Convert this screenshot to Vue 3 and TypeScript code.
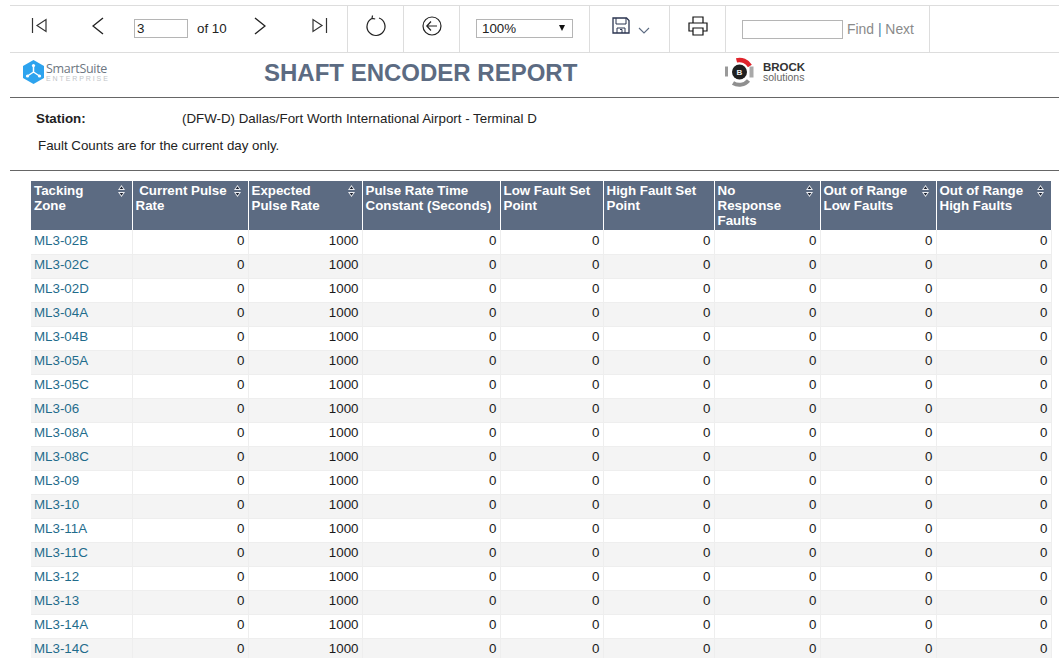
<template>
  <div class="page">
    <div class="toolbar">
      <div class="tb-nav">
        <svg class="ic-first" width="16" height="18" viewBox="0 0 16 18"><path d="M1.500 1v15M15 2.500v12L6 8.500z" fill="none" stroke="#333" stroke-width="1.200"/></svg>
        <svg class="ic-prev" width="12" height="18" viewBox="0 0 12 18"><path d="M11 1 1 9l10 8" fill="none" stroke="#222" stroke-width="1.400"/></svg>
        <input class="page-input" type="text" value="3" />
        <span class="of">of 10</span>
        <svg class="ic-next" width="12" height="18" viewBox="0 0 12 18"><path d="M1 1l10 8-10 8" fill="none" stroke="#222" stroke-width="1.400"/></svg>
        <svg class="ic-last" width="16" height="18" viewBox="0 0 16 18"><path d="M14.500 1v15M1 2.500v12l9-6z" fill="none" stroke="#333" stroke-width="1.200"/></svg>
      </div>
      <div class="tb-cell tb-icon">
        <svg width="22" height="22" viewBox="0 0 22 22"><path d="M7.500 3.200A9 9 0 1 0 14 3M7 3.300l.5-2.800M7 3.300l3.200.7" fill="none" stroke="#222" stroke-width="1.200"/></svg>
      </div>
      <div class="tb-cell tb-icon">
        <svg width="22" height="22" viewBox="0 0 22 22"><circle cx="11" cy="11" r="9" fill="none" stroke="#222" stroke-width="1.200"/><path d="M16 11H6M10 6.500 5.800 11l4.200 4.500" fill="none" stroke="#222" stroke-width="1.200"/></svg>
      </div>
      <div class="tb-cell tb-zoom">
        <div class="zoom-select"><span>100%</span><i class="caret"></i></div>
      </div>
      <div class="tb-cell tb-save">
        <svg width="18" height="17" viewBox="0 0 18 17"><path d="M1 1h13.500L17 3.500V16H1z" fill="none" stroke="#2b3550" stroke-width="1.300"/><path d="M4 1v6h10V1M5 16v-5h8v5M8 12.500h2V16" fill="none" stroke="#2b3550" stroke-width="1"/></svg>
        <svg class="ic-caret" width="12" height="7" viewBox="0 0 12 7"><path d="M1 1l5 5 5-5" fill="none" stroke="#5c6b82" stroke-width="1.100"/></svg>
      </div>
      <div class="tb-cell tb-print">
        <svg width="20" height="20" viewBox="0 0 20 20"><path d="M5 7V1h10v6M5 15H1V7h18v8h-4M5 12h10v7H5z" fill="none" stroke="#111" stroke-width="1.200"/></svg>
      </div>
      <div class="tb-cell tb-find">
        <input class="find-input" type="text" />
        <span class="find-links">Find <b>|</b> Next</span>
      </div>
    </div>

    <div class="report-head">
      <div class="logo-smart">
        <svg width="21" height="24" viewBox="0 0 21 24">
          <path d="M10.500 0 21 6v12l-10.500 6L0 18V6z" fill="#2da3ee"/>
          <path d="M10.500 5.500V12M10.500 12l-6 4M10.500 12l6 4" stroke="#fff" stroke-width="1.500" fill="none"/>
          <circle cx="10.500" cy="5.500" r="1.600" fill="#fff"/><circle cx="4.500" cy="16" r="1.600" fill="#fff"/><circle cx="16.500" cy="16" r="1.600" fill="#fff"/>
        </svg>
        <div class="smart-text">
          <span class="smart-name">SmartSuite</span>
          <span class="smart-sub">ENTERPRISE</span>
        </div>
      </div>
      <h1 class="title">SHAFT ENCODER REPORT</h1>
      <div class="logo-brock">
        <svg width="34" height="30" viewBox="0 0 34 30" fill="none">
          <path d="M12.500 3.400A12 12 0 0 1 25.900 9" stroke="#e0232b" stroke-width="4.500"/>
          <path d="M27.500 9.500v11" stroke="#a9a9a9" stroke-width="4"/>
          <path d="M24.500 23.500A12 12 0 0 1 9 26" stroke="#8f8f8f" stroke-width="4"/>
          <path d="M2.500 9.500v10" stroke="#9a9a9a" stroke-width="3"/>
          <circle cx="15.500" cy="15" r="7.500" fill="#1f1f1f"/>
          <text x="15.500" y="18" font-size="8" font-weight="700" fill="#eee" text-anchor="middle" font-family="Liberation Sans">B</text>
        </svg>
        <div class="brock-text">
          <span class="brock-name">BROCK</span>
          <span class="brock-sub">solutions</span>
        </div>
      </div>
    </div>

    <div class="info">
      <div class="station">
        <span class="station-label">Station:</span>
        <span>(DFW-D) Dallas/Fort Worth International Airport - Terminal D</span>
      </div>
      <p class="note">Fault Counts are for the current day only.</p>
    </div>

    <div class="table-wrap">
      <table class="grid">
        <colgroup>
          <col v-for="col in columns" :key="col.label" :style="{ width: col.width + 'px' }" />
        </colgroup>
        <thead>
          <tr>
            <th v-for="col in columns" :key="col.label">
              <span v-html="col.label"></span>
              <svg v-if="col.sort" class="sort" width="7" height="12" viewBox="0 0 7 12">
                <path d="M3.500 0 7 5H0z" fill="#eceef2"/>
                <path d="M3.500 12 7 7H0z" fill="#eceef2"/>
                <path d="M3.500 1.500 5.300 4H1.700zM3.500 10.500 5.300 8H1.700z" fill="#1c2230"/>
              </svg>
            </th>
          </tr>
        </thead>
        <tbody>
          <tr v-for="zone in zones" :key="zone">
            <td class="zone">{{ zone }}</td>
            <td>0</td>
            <td>1000</td>
            <td>0</td>
            <td>0</td>
            <td>0</td>
            <td>0</td>
            <td>0</td>
            <td>0</td>
          </tr>
        </tbody>
      </table>
    </div>
  </div>
</template>

<script setup lang="ts">
const columns = [
  { label: 'Tacking<br>Zone', width: 101, sort: true },
  { label: '&nbsp;Current Pulse<br>Rate', width: 116, sort: true },
  { label: 'Expected<br>Pulse Rate', width: 114, sort: true },
  { label: 'Pulse Rate Time<br>Constant (Seconds)', width: 138, sort: false },
  { label: 'Low Fault Set<br>Point', width: 103, sort: false },
  { label: 'High Fault Set<br>Point', width: 111, sort: false },
  { label: 'No<br>Response<br>Faults', width: 106, sort: true },
  { label: 'Out of Range<br>Low Faults', width: 116, sort: true },
  { label: 'Out of Range<br>High Faults', width: 115, sort: true }
]

const zones = [
  'ML3-02B', 'ML3-02C', 'ML3-02D', 'ML3-04A', 'ML3-04B', 'ML3-05A',
  'ML3-05C', 'ML3-06', 'ML3-08A', 'ML3-08C', 'ML3-09', 'ML3-10',
  'ML3-11A', 'ML3-11C', 'ML3-12', 'ML3-13', 'ML3-14A', 'ML3-14C'
]
</script>

<style>
html, body {
  margin: 0;
  height: 658px;
  overflow: hidden;
  background: #fff;
}
</style>

<style scoped>
.page {
  padding: 5px 0 0 10px;
  font-family: "Liberation Sans", Arial, sans-serif;
  font-size: 13.333px;
  color: #222;
}

.toolbar {
  display: flex;
  height: 46px;
  border-top: 1px solid #ddd;
  border-bottom: 1px solid #ddd;
}

.tb-nav {
  width: 338px;
  display: flex;
  align-items: center;
  border-right: 1px solid #ddd;
  box-sizing: border-box;
  padding-bottom: 2px;
}
.ic-first { margin-left: 21px; margin-top: -4px; }
.ic-prev { margin-left: 45px; margin-top: -4px; }
.page-input {
  width: 54px;
  height: 19px;
  margin-left: 30px;
  box-sizing: border-box;
  border: 1px solid #b5b5b5;
  padding: 0 2px;
  font: 13.333px "Liberation Sans", Arial, sans-serif;
  color: #222;
}
.of { margin-left: 9px; color: #222; }
.ic-next { margin-left: 27px; margin-top: -4px; }
.ic-last { margin-left: 46px; margin-top: -4px; }

.tb-cell {
  display: flex;
  align-items: center;
  box-sizing: border-box;
  border-right: 1px solid #ddd;
}
.tb-icon { width: 56px; justify-content: center; padding-bottom: 6px; }
.tb-zoom { width: 130px; padding-left: 16px; padding-bottom: 2px; }
.zoom-select {
  width: 97px;
  height: 19px;
  box-sizing: border-box;
  border: 1px solid #b5b5b5;
  padding: 0 7px 0 5px;
  display: flex;
  align-items: center;
  justify-content: space-between;
  line-height: 17px;
  color: #222;
}
.caret {
  border-left: 3px solid transparent;
  border-right: 3px solid transparent;
  border-top: 6px solid #111;
}
.tb-save { width: 80px; padding-left: 22px; padding-bottom: 8px; }
.ic-caret { margin-left: 8px; margin-top: 10px; }
.tb-print { width: 56px; justify-content: center; padding-bottom: 6px; }
.tb-find { width: 204px; padding-left: 16px; }
.find-input {
  width: 101px;
  height: 19px;
  box-sizing: border-box;
  border: 1px solid #b5b5b5;
  padding: 0;
}
.find-links { margin-left: 4px; font-size: 13.900px; color: #8a8a8a; }
.find-links b { font-weight: 400; color: #4e7fa5; }

.report-head {
  height: 44px;
  display: flex;
  align-items: flex-start;
  border-bottom: 1px solid #666;
}
.logo-smart {
  display: flex;
  align-items: center;
  margin: 7px 0 0 13px;
  width: 118px;
}
.smart-text {
  display: flex;
  flex-direction: column;
  margin-left: 2px;
}
.smart-name {
  font-family: "Open Sans", sans-serif;
  font-size: 12.500px;
  line-height: 13px;
  letter-spacing: -0.300px;
  color: #6d7681;
}
.smart-sub {
  font-size: 7px;
  line-height: 7px;
  letter-spacing: 1.900px;
  color: #c2c5c8;
}
.title {
  margin: 6px 0 0 123px;
  width: 325px;
  font-size: 24px;
  line-height: 28px;
  font-weight: 700;
  color: #5c6b82;
  white-space: nowrap;
}
.logo-brock {
  display: flex;
  align-items: center;
  margin: 4px 0 0 135px;
}
.brock-text {
  display: flex;
  flex-direction: column;
  margin-left: 5px;
  margin-top: 0;
}
.brock-name {
  font-size: 11.500px;
  line-height: 11px;
  font-weight: 700;
  color: #333;
}
.brock-sub {
  font-size: 10.500px;
  line-height: 9px;
  color: #666;
}

.info {
  height: 73px;
  box-sizing: border-box;
  padding-top: 12px;
  border-bottom: 1px solid #666;
}
.station {
  display: flex;
  padding-left: 26px;
  line-height: 17px;
}
.station-label {
  width: 146px;
  font-weight: 700;
}
.note {
  margin: 10px 0 0 28px;
  line-height: 17px;
}

.table-wrap {
  margin: 10px 0 0 21px;
}
.grid {
  table-layout: fixed;
  width: 1020px;
  border-collapse: collapse;
}
th {
  position: relative;
  height: 49px;
  box-sizing: border-box;
  padding: 2px 3px 1px;
  background: #5c6b82;
  border-right: 1px solid #fff;
  color: #fff;
  font-size: 13.333px;
  line-height: 15px;
  font-weight: 700;
  text-align: left;
  vertical-align: top;
}
.sort {
  position: absolute;
  top: 4px;
  right: 7px;
}
td {
  height: 24px;
  box-sizing: border-box;
  padding: 0 3px 2px;
  border-right: 1px solid #eee;
  border-bottom: 1px solid #eee;
  text-align: right;
  font-size: 13.333px;
  line-height: 18px;
  color: #1a1a1a;
}
tbody tr:nth-child(even) td {
  background: #f4f4f4;
}
td.zone {
  text-align: left;
  color: #1f6c8c;
}
</style>
